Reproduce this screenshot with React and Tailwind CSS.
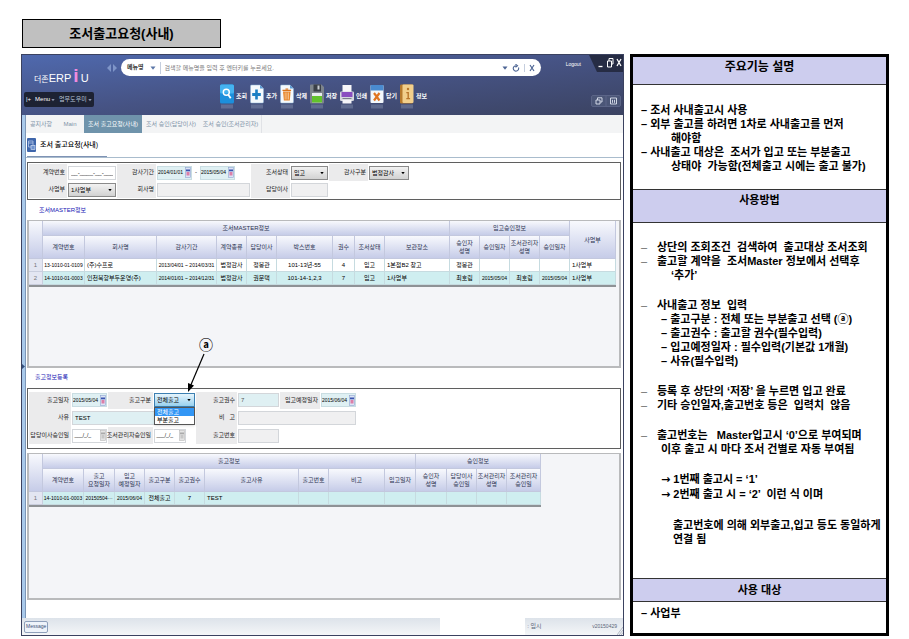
import React from "react";

const TINY = "font-['Liberation_Sans','Noto_Sans_CJK_KR',sans-serif]";

function Caret({ className = "" }) {
  return (
    <svg viewBox="0 0 6 4" className={`h-1 shrink-0 ${className}`} aria-hidden="true">
      <path d="M0.5 0.5h5L3 3.8z" fill="currentColor" />
    </svg>
  );
}

/* ---------- toolbar icons ---------- */

function Sheet() {
  return (
    <>
      <path d="M1.5 1h8.5l3.5 3.5V18a1 1 0 0 1-1 1h-11a1 1 0 0 1-1-1V2a1 1 0 0 1 1-1z" fill="#f4f9fd" stroke="#8db4d8" strokeWidth="0.5" />
      <path d="M10 1v3.5h3.5z" fill="#5a9bd5" />
    </>
  );
}

const TOOLS = [
  {
    label: "조회",
    art: (
      <>
        <rect x="0" y="0.5" width="14" height="19" rx="1.5" fill="#1c8fdc" />
        <rect x="0" y="0.5" width="14" height="9" rx="1.5" fill="#45b3f0" />
        <circle cx="6.3" cy="8.3" r="3" fill="none" stroke="#fff" strokeWidth="1.4" />
        <path d="M8.3 10.8l2.4 3.4" stroke="#fff" strokeWidth="1.8" />
      </>
    ),
  },
  {
    label: "추가",
    art: (
      <>
        <Sheet />
        <path d="M5.2 5.5h2.6v3.6h3v2.8h-3v3.6H5.2v-3.6h-3V9.1h3z" fill="#1b7fc4" />
      </>
    ),
  },
  {
    label: "삭제",
    art: (
      <>
        <Sheet />
        <path d="M3 7.5h7.6l-.8 9H3.9z" fill="#e8862a" />
        <path d="M2.5 6.3h8.6M5.5 5h2.7" stroke="#d9731a" strokeWidth="1.2" />
        <path d="M5.2 8.5v7M6.9 8.5v7M8.5 8.5v7" stroke="#fbe0c0" strokeWidth="0.6" />
      </>
    ),
  },
  {
    label: "저장",
    art: (
      <>
        <path d="M1 0.5h10.5L14 3v15.5a1 1 0 0 1-1 1H1a1 1 0 0 1-1-1V1.5a1 1 0 0 1 1-1z" fill="#7d848c" />
        <rect x="3.5" y="0.5" width="7.5" height="7" fill="#3a3f47" />
        <rect x="7.5" y="1.5" width="2" height="4" fill="#c9ced4" />
        <rect x="2" y="9" width="10" height="9.5" fill="#e8ecee" />
        <rect x="2" y="12" width="10" height="6.5" fill="#62c22c" />
      </>
    ),
  },
  {
    label: "인쇄",
    art: (
      <>
        <rect x="2.5" y="1" width="9" height="7" fill="#f7f7fa" />
        <rect x="0" y="7.5" width="14" height="9.5" rx="1.2" fill="#d5d8df" />
        <rect x="1.5" y="8" width="11" height="5" fill="#8a4fc0" />
        <rect x="2.5" y="15" width="9" height="4.5" fill="#f4f4f8" />
        <path d="M2.5 14.7h9" stroke="#4a4f5c" strokeWidth="0.8" />
      </>
    ),
  },
  {
    label: "닫기",
    art: (
      <>
        <rect x="0.5" y="1" width="13" height="18" rx="1" fill="#f3f8fc" />
        <path d="M0.5 2a1 1 0 0 1 1-1h11a1 1 0 0 1 1 1v4.5h-13z" fill="#4a8bd0" />
        <path d="M4 9l5.5 7.5M9.5 9L4 16.5" stroke="#e07522" strokeWidth="2.2" />
      </>
    ),
  },
  {
    label: "정보",
    art: (
      <>
        <rect x="0" y="0.5" width="13" height="19" rx="1.2" fill="#b77a2c" />
        <rect x="2.5" y="0.5" width="11" height="18.5" rx="1" fill="#f2cf8b" />
        <circle cx="8" cy="5" r="1.2" fill="#b9762b" />
        <path d="M6.3 8h2.6v6h1.2v1.3H6.3V14h1.2V9.3H6.3z" fill="#b9762b" />
      </>
    ),
  },
];

function Toolbar() {
  return (
    <div className="flex">
      {TOOLS.map((t) => (
        <button key={t.label} type="button" className="flex w-[30px] items-center gap-0.5 whitespace-nowrap text-[6px] font-bold text-white">
          <svg viewBox="0 0 14 25" className="h-[25px] w-3.5 shrink-0" aria-hidden="true">
            {t.art}
            <rect x="1" y="20.5" width="12" height="4" fill="#c9d4e8" opacity="0.22" />
          </svg>
          {t.label}
        </button>
      ))}
    </div>
  );
}

function Header() {
  return (
    <header className="flex h-[60px] shrink-0 bg-linear-to-br from-[#4f69ae] via-[#465384] to-[#3b4362] text-white">
      <div className="flex w-[72px] shrink-0 flex-col justify-between pt-3 pb-2 pl-0.5">
        <h2 className="flex h-[18px] items-baseline pl-2.5 text-[11px] leading-[18px]">
          <span className="text-[8px]">더존</span>
          <span>ERP</span>
          <span className="px-0.5 text-[19px] font-bold text-[#f08be0]">i</span>
          <span>U</span>
        </h2>
        <nav className="flex h-[15px] w-[70px] items-center gap-1 rounded-xs bg-[#1d2233] px-0.5 text-[6px] whitespace-nowrap">
          <span>|+</span>
          <button type="button" className="flex items-center gap-px">
            Menu <Caret className="w-1 text-[#8d95ad]" />
          </button>
          <button type="button" className="flex items-center gap-px text-[#b9c4d8]">
            업무도우미 <Caret className="w-1 text-[#8d95ad]" />
          </button>
        </nav>
      </div>
      <div className="flex min-w-0 flex-1 flex-col pt-1">
        <div className="flex items-center">
          <svg viewBox="0 0 10 8" className="mr-1 ml-[13px] h-2 w-2.5 shrink-0" aria-hidden="true">
            <path d="M4 0v8L0 4zM6 0v8l4-4z" fill="#7f95c8" />
          </svg>
          <div className="flex h-[17px] min-w-0 flex-1 items-center rounded-full bg-white px-1.5 text-[6px] text-[#333]">
            <button type="button" className="flex items-center gap-1.5 font-bold whitespace-nowrap">
              메뉴명 <Caret className="w-1.5 text-[#5c77a8]" />
            </button>
            <input
              aria-label="메뉴 검색"
              placeholder="검색할 메뉴명을 입력 후 엔터키를 누르세요."
              className="ml-1 h-3 min-w-0 flex-1 border-l border-[#c5cede] pl-1 text-[6px] outline-none placeholder:text-[#777]"
            />
            <Caret className="w-1.5 text-[#4d6594]" />
            <svg viewBox="0 0 8 8" className="mx-1 h-2 w-2" fill="none" stroke="#4d6594" strokeWidth="1.1" aria-hidden="true">
              <path d="M4 1.7A2.7 2.7 0 1 0 6.5 3.5M3.5 0.2l2 1.5-2 1.5" />
            </svg>
            <button type="button" aria-label="지우기" className="border-l border-[#c5cede] pl-1">
              <svg viewBox="0 0 6 8" className="h-2 w-1.5" stroke="#4d6594" strokeWidth="1.2" aria-hidden="true">
                <path d="M1 1l4 6M5 1L1 7" />
              </svg>
            </button>
          </div>
        </div>
        <div className="mt-2 flex pl-[126px]">
          <Toolbar />
        </div>
      </div>
      <div className="flex w-[82px] shrink-0 flex-col justify-between pb-2">
        <div className="flex justify-end text-[5px]">
          <a href="#logout" className="mt-1.5 mr-2 text-white">Logout</a>
          <svg viewBox="0 0 34 17" className="h-[17px] w-[34px]" fill="none" stroke="#fff" strokeWidth="1.3" aria-label="창 제어">
            <path d="M0 0h34v17H8z" fill="#262c44" stroke="none" />
            <path d="M9.5 11.5h4" />
            <path d="M18.5 6h4v6h-4zM20 6V3.5h4V9h-1.5" strokeWidth="1" />
            <path d="M28 4l4 7M32 4l-4 7" />
          </svg>
        </div>
        <svg viewBox="0 0 30 12" className="mr-0.5 h-3 w-[30px] self-end" fill="none" stroke="#dfe4f0" strokeWidth="0.9" aria-hidden="true">
          <rect x="0.5" y="0.5" width="29" height="11" rx="1.5" fill="#4b5677" stroke="#5d688a" />
          <path d="M15 1v10" stroke="#5d688a" />
          <path d="M5 5h4v4H5zM6.5 5V2.8H11V7H9.2" />
          <path d="M19.5 3h6v6h-6zM21.5 4.8v3M23.5 4.8v3" />
        </svg>
      </div>
    </header>
  );
}

/* ---------- form pieces ---------- */

const FIELD = "h-[14px] w-full min-w-0 border border-[#d3d6da] px-0.5 text-[6px] leading-none outline-none";

function Label({ htmlFor, children }) {
  return (
    <label htmlFor={htmlFor} className="flex h-full items-center justify-end bg-[#ebebec] pr-0.5 text-[6px] whitespace-nowrap text-[#222]">
      {children}
    </label>
  );
}

function Calendar({ muted }) {
  return (
    <svg viewBox="0 0 6 11" className="h-[11px] w-1.5 shrink-0" aria-hidden="true">
      <rect x="0.5" y="0.5" width="5" height="10" fill={muted ? "#e4e4e4" : "#dde4f6"} stroke={muted ? "#b9b9b9" : "#8fa3d0"} strokeWidth="0.6" />
      <rect x="1" y="2.5" width="4" height="1.8" fill={muted ? "#aaa" : "#3b55b0"} />
      <rect x="1.5" y="5" width="3" height="3.5" fill={muted ? "#c6c6c6" : "#dc7fa8"} />
    </svg>
  );
}

function DateField({ id, value, muted, label }) {
  return (
    <div className={`flex h-[14px] items-center border ${muted ? "border-[#d3d6da] bg-white" : "border-[#c9dde2] bg-[#dff0f3]"}`}>
      <input id={id} aria-label={label} defaultValue={value} className="min-w-0 flex-1 text-[5px] text-black outline-none" />
      <Calendar muted={muted} />
    </div>
  );
}

function Select({ id, value, options, blue }) {
  return (
    <div className="relative">
      <select
        id={id}
        defaultValue={value}
        className={`block h-[14px] w-full appearance-none border pl-0.5 text-[6px] leading-none text-black outline-none ${blue ? "border-[#3c7fb1] bg-linear-to-b from-[#e5f4fc] to-[#98d1ef]" : "border-[#8a8a8a] bg-linear-to-b from-[#f2f2f2] to-[#d2d2d2]"}`}
      >
        {options.map((o) => (
          <option key={o}>{o}</option>
        ))}
      </select>
      <Caret className="pointer-events-none absolute top-[5px] right-1 w-1 text-black" />
    </div>
  );
}

function SearchForm() {
  return (
    <form className="grid h-[38px] shrink-0 grid-cols-[38px_48px_39px_93px_39px_37px_39px_40px] grid-rows-2 items-center gap-x-px border border-[#5f5f5f] bg-white p-px">
      <Label htmlFor="contract">계약번호</Label>
      <input id="contract" defaultValue="__-____-__-____" className={`${FIELD} bg-white text-center`} />
      <Label htmlFor="from">감사기간</Label>
      <div className="flex items-center text-[6px]">
        <div className="w-[35px]"><DateField id="from" value="2014/01/01" /></div>
        <span className="w-2 text-center">-</span>
        <div className="w-[35px]"><DateField label="감사기간 종료" value="2015/05/04" /></div>
      </div>
      <Label htmlFor="state">조서상태</Label>
      <Select id="state" value="입고" options={["입고", "출고"]} />
      <Label htmlFor="kind">감사구분</Label>
      <Select id="kind" value="법정감사" options={["법정감사", "임의감사"]} />
      <Label htmlFor="dept">사업부</Label>
      <Select id="dept" value="1사업부" options={["1사업부", "2사업부"]} />
      <Label htmlFor="company">회사명</Label>
      <input id="company" className={`${FIELD} bg-[#f0f0f1]`} />
      <Label htmlFor="director">담당이사</Label>
      <input id="director" className={`${FIELD} bg-[#f0f0f1]`} />
    </form>
  );
}

function ReleaseForm() {
  return (
    <form className="grid h-[61px] shrink-0 grid-cols-[42px_35px_45px_41px_41px_41px_40px_35px] grid-rows-3 items-center gap-x-px border border-[#5f5f5f] bg-white px-px py-[3px]">
      <Label htmlFor="outdate">출고일자</Label>
      <DateField id="outdate" value="2015/05/04" />
      <Label htmlFor="outkind">출고구분</Label>
      <div className="relative z-10">
        <Select id="outkind" value="전체출고" options={["전체출고", "부분출고"]} blue />
        <ul className="absolute top-[14px] left-0 w-full border border-[#555] bg-white text-[6px] leading-[8px] text-black shadow-sm">
          <li className="bg-[#3296f5] pl-0.5 text-white">전체출고</li>
          <li className="pl-0.5">부분출고</li>
        </ul>
        <div className="pointer-events-none absolute bottom-[14px] left-[33px] flex w-14 flex-col">
          <span className="pl-3 text-[14px] leading-[16px] font-bold text-black">ⓐ</span>
          <svg viewBox="0 0 24 40" className="h-10 w-6" aria-hidden="true">
            <path d="M17 1L3 34" stroke="#000" strokeWidth="1.2" />
            <path d="M1 39l0-9 6 2.500z" fill="#000" />
          </svg>
        </div>
      </div>
      <Label htmlFor="outcount">출고권수</Label>
      <input id="outcount" defaultValue="7" className={`${FIELD} bg-[#dff0f3] text-[#555]`} />
      <Label htmlFor="indate">입고예정일자</Label>
      <DateField id="indate" value="2015/06/04" />

      <Label htmlFor="reason">사유</Label>
      <input id="reason" defaultValue="TEST" className={`${FIELD} col-span-3 bg-[#dff0f3]`} />
      <Label htmlFor="memo"><span className="whitespace-pre">비   고</span></Label>
      <input id="memo" className={`${FIELD} col-span-3 bg-[#f0f0f1]`} />

      <Label htmlFor="dirdate">담당이사승인일</Label>
      <DateField id="dirdate" value=" ___/_/_" muted />
      <Label htmlFor="mgrdate">조서관리자승인일</Label>
      <div className="w-8"><DateField id="mgrdate" value=" ___/_/_" muted /></div>
      <Label htmlFor="outno">출고번호</Label>
      <input id="outno" className={`${FIELD} bg-[#f0f0f1]`} />
    </form>
  );
}

/* ---------- grids ---------- */

const TH = "border-r border-b border-[#c3c8de] bg-linear-to-b from-[#f8f9fd] to-[#c6cce8] p-0 font-normal text-[#2c3350]";

/* Dates and contract numbers are set one step smaller so that they fit their columns. */
const isCode = (v) => /^(\d{8}|\d{4}\/|\d\d-)/.test(v);

function Grid({ cols, groups, heads, tail, rows, lefts, width }) {
  return (
    <div className="min-h-0 flex-1 overflow-hidden border-2 border-t border-[#b9babc] bg-[#f4f5f8]">
      <table className={`${width} table-fixed border-separate border-spacing-0 border-b-2 border-[#8e9296] text-center text-[6px] leading-[8px] whitespace-nowrap`}>
        <colgroup>
          {cols.map((c, i) => (
            <col key={i} style={{ width: c }} />
          ))}
        </colgroup>
        <thead>
          <tr className="h-[15px]">
            <th rowSpan={2} className={TH} />
            {groups.map(([name, span]) => (
              <th key={name} colSpan={span} className={TH}>{name}</th>
            ))}
            {tail && <th rowSpan={2} className={TH}>{tail}</th>}
          </tr>
          <tr className="h-[23px]">
            {heads.map((h, i) => (
              <th key={i} className={`${TH} whitespace-pre-line`}>{h}</th>
            ))}
          </tr>
        </thead>
        <tbody>
          {rows.map((r, n) => (
            <tr key={n} className={`h-[13px] ${n === rows.length - 1 ? "bg-[#cfeef0]" : "bg-white"}`}>
              <td className="border-r border-b border-[#c9cede] bg-[#e3e6f2] p-0 text-[#777]">{n + 1}</td>
              {r.map((v, i) => (
                <td key={i} className={`border-r border-b border-[#c6dbe0] p-0 text-black ${isCode(v) ? "text-[5px]" : ""} ${lefts.includes(i) ? "pl-0.5 text-left" : ""}`}>{v}</td>
              ))}
            </tr>
          ))}
        </tbody>
      </table>
    </div>
  );
}

const MASTER_ROWS = [
  ["13-1010-01-0109", "(주)수프로", "2013/04/01 ~ 2014/03/31", "법정감사", "정봉관", "101-13년-55", "4", "입고", "1본점B2 창고", "정봉관", "", "", "", "1사업부"],
  ["14-1010-01-0003", "인천북항부두운영(주)", "2014/01/01 ~ 2014/12/31", "법정감사", "권문택", "101-14-1,2,3", "7", "입고", "1사업부", "최호림", "2015/05/04", "최호림", "2015/05/04", "1사업부"],
];

const RELEASE_ROWS = [["14-1010-01-0003", "20150504···", "2015/06/04", "전체출고", "7", "TEST", "", "", "", "", "", "", ""]];

function ErpWindow() {
  return (
    <section className={`flex min-w-0 flex-1 flex-col border border-[#3b4260] bg-white ${TINY}`}>
      <Header />
      <div className="flex min-h-0 flex-1">
        <div className="flex w-1 shrink-0 items-center border-r border-[#7d97b8] bg-[#a9c9ea]">
          <svg viewBox="0 0 3 5" className="h-[5px] w-[3px]" aria-hidden="true"><path d="M0 0v5l3-2.500z" fill="#34507c" /></svg>
        </div>
        <div className="flex min-w-0 flex-1 flex-col">
          <nav className="flex h-[18px] shrink-0 items-stretch bg-[#f3f4f5] text-[6px] whitespace-nowrap text-[#7e93a8]">
            <a href="#notice" className="flex w-[30px] items-center pl-1">공지사항</a>
            <a href="#main" className="flex w-7 items-center justify-center">Main</a>
            <a href="#release" className="flex w-[58px] items-center justify-center bg-[#6f93ab] text-white">조서 출고요청(사내)</a>
            <a href="#director" className="flex w-[58px] items-center justify-center">조서 승인(담당이사)</a>
            <a href="#manager" className="flex w-[62px] items-center justify-center border-r border-[#e0e2e6]">조서 승인(조서관리자)</a>
          </nav>
          <div className="flex h-[25px] shrink-0 border-b border-[#a9bccd] pl-px">
            <div className="flex w-20 items-center gap-1 border-b border-[#7f93b5] whitespace-nowrap">
              <svg viewBox="0 0 9 14" className="h-3.5 w-[9px] shrink-0" aria-hidden="true">
                <rect width="9" height="14" rx="1" fill="#3f66ab" />
                <path d="M1.5 3h4.5v6H1.5zM1.5 5h4.5" fill="none" stroke="#c3d4f0" strokeWidth="0.7" />
                <rect x="4" y="7.5" width="4" height="4" fill="#6f93cf" stroke="#dce6f7" strokeWidth="0.6" />
              </svg>
              <h3 className="text-[7px] leading-none font-medium text-black">조서 출고요청(사내)</h3>
            </div>
          </div>
          <div className="flex min-h-0 flex-1 flex-col pt-1 pr-0.5 pb-[18px] pl-px">
            <SearchForm />
            <h4 className="flex h-5 shrink-0 items-center pl-3 text-[6px] text-[#1414b4]">조서MASTER정보</h4>
            <Grid
              width="w-[587px]"
              cols={[14, 42, 72, 60, 30, 30, 56, 22, 30, 65, 30, 30, 30, 30, 46]}
              groups={[["조서MASTER정보", 9], ["입고승인정보", 4]]}
              heads={["계약번호", "회사명", "감사기간", "계약종류", "담당이사", "박스번호", "권수", "조서상태", "보관장소", "승인자\n성명", "승인일자", "조서관리자\n성명", "승인일자"]}
              tail="사업부"
              rows={MASTER_ROWS}
              lefts={[1, 8, 13]}
            />
            <h4 className="flex h-5 shrink-0 items-center pl-2 text-[6px] text-[#1414b4]">출고정보등록</h4>
            <ReleaseForm />
            <div className="h-1 shrink-0" />
            <Grid
              width="w-[512px]"
              cols={[14, 41, 31, 30, 30, 30, 94, 30, 56, 31, 31, 30, 30, 34]}
              groups={[["출고정보", 9], ["승인정보", 4]]}
              heads={["계약번호", "출고\n요청일자", "입고\n예정일자", "출고구분", "출고권수", "출고사유", "출고번호", "비고", "입고일자", "승인자\n성명", "담당이사\n승인일", "조서관리자\n성명", "조서관리자\n승인일"]}
              rows={RELEASE_ROWS}
              lefts={[5]}
            />
          </div>
        </div>
      </div>
      <footer className="flex h-[17px] shrink-0 items-center bg-linear-to-b from-[#dde3ea] to-[#f4f6f8] pl-0.5 text-[6px] text-[#5a6478]">
        <button type="button" className="h-3 rounded-xs border border-[#8fa0bb] bg-[#eef3fa] px-px text-[5px] text-[#3d5078]">Message</button>
        <span className="ml-auto h-full w-[85px] bg-white" />
        <span className="w-[67px] pl-0.5">: 임시</span>
        <span className="text-[5px]">v20150429</span>
        <svg viewBox="0 0 6 8" className="h-2 w-1.5 self-end" stroke="#9aa3b2" strokeWidth="0.7" aria-hidden="true">
          <path d="M0 8l6-8M2 8l4-5M4 8l2-2.500" />
        </svg>
      </footer>
    </section>
  );
}

/* ---------- description panel ---------- */

function Item({ children }) {
  return (
    <li className="flex whitespace-pre">
      <span className="w-4 font-normal text-[#666]">–</span>
      <span>{children}</span>
    </li>
  );
}

function Arrow() {
  return <span className="font-['DejaVu_Sans',sans-serif]">→</span>;
}

function Guide() {
  return (
    <aside className="flex w-[259px] shrink-0 flex-col border-[3px] border-black bg-white text-[11px] leading-[14px] font-bold whitespace-pre text-black">
      <h2 className="h-7 shrink-0 border-b border-[#333] bg-[#cdcdee] pt-[3px] text-center text-[12px]">주요기능 설명</h2>
      <div className="h-[104px] shrink-0 pt-[18px] pl-2">
        <p>– 조서 사내출고시 사용</p>
        <p>– 외부 출고를 하려면 1차로 사내출고를 먼저</p>
        <p className="pl-[30px]">해야함</p>
        <p>– 사내출고 대상은  조서가 입고 또는 부분출고</p>
        <p className="pl-[30px]">상태야  가능함(전체출고 시에는 출고 불가)</p>
      </div>
      <h2 className="h-[34px] shrink-0 border-y border-[#333] bg-[#cdcdee] pt-[3px] text-center">사용방법</h2>
      <div className="flex flex-1 flex-col gap-4 pt-[17px] pl-2">
        <ul>
          <Item>상단의 조회조건  검색하여  출고대상 조서조회</Item>
          <Item>출고할 계약을  조서Master 정보에서 선택후</Item>
          <li className="pl-[30px]">‘추가’</li>
        </ul>
        <ul>
          <Item>사내출고 정보  입력</Item>
          <li className="pl-5">– 출고구분 : 전체 또는 부분출고 선택 (ⓐ)</li>
          <li className="pl-5">– 출고권수 : 출고할 권수(필수입력)</li>
          <li className="pl-5">– 입고예정일자 : 필수입력(기본값 1개월)</li>
          <li className="pl-5">– 사유(필수입력)</li>
        </ul>
        <ul>
          <Item>등록 후 상단의 ‘저장’ 을 누르면 입고 완료</Item>
          <Item>기타 승인일자,출고번호 등은  입력치  않음</Item>
        </ul>
        <ul>
          <Item>출고번호는   Master입고시 ‘0’으로 부여되며</Item>
          <li className="pl-5">이후 출고 시 마다 조서 건별로 자동 부여됨</li>
        </ul>
        <ul className="pl-5">
          <li><Arrow /> 1번째 출고시 = ‘1’</li>
          <li><Arrow /> 2번째 출고 시 = ‘2’  이런 식 이며</li>
        </ul>
        <div className="pl-8">
          <p>출고번호에 의해 외부출고,입고 등도 동일하게</p>
          <p>연결 됨</p>
        </div>
      </div>
      <h2 className="h-6 shrink-0 border-y border-[#333] bg-[#cdcdee] pt-1 text-center">사용 대상</h2>
      <p className="h-[31px] shrink-0 pt-1 pl-2">– 사업부</p>
    </aside>
  );
}

export default function App() {
  return (
    <div className="flex min-h-screen flex-col bg-white px-5 pt-[19px] pb-[3px] font-['Liberation_Sans','Noto_Sans_CJK_KR',sans-serif]">
      <h1 className="ml-0.5 flex h-[29px] w-[199px] items-center justify-center border border-black bg-[#c0c0c0] text-[13px] font-bold text-black">조서출고요청(사내)</h1>
      <main className="mt-1.5 ml-px flex flex-1 items-stretch gap-1.5">
        <ErpWindow />
        <Guide />
      </main>
    </div>
  );
}
